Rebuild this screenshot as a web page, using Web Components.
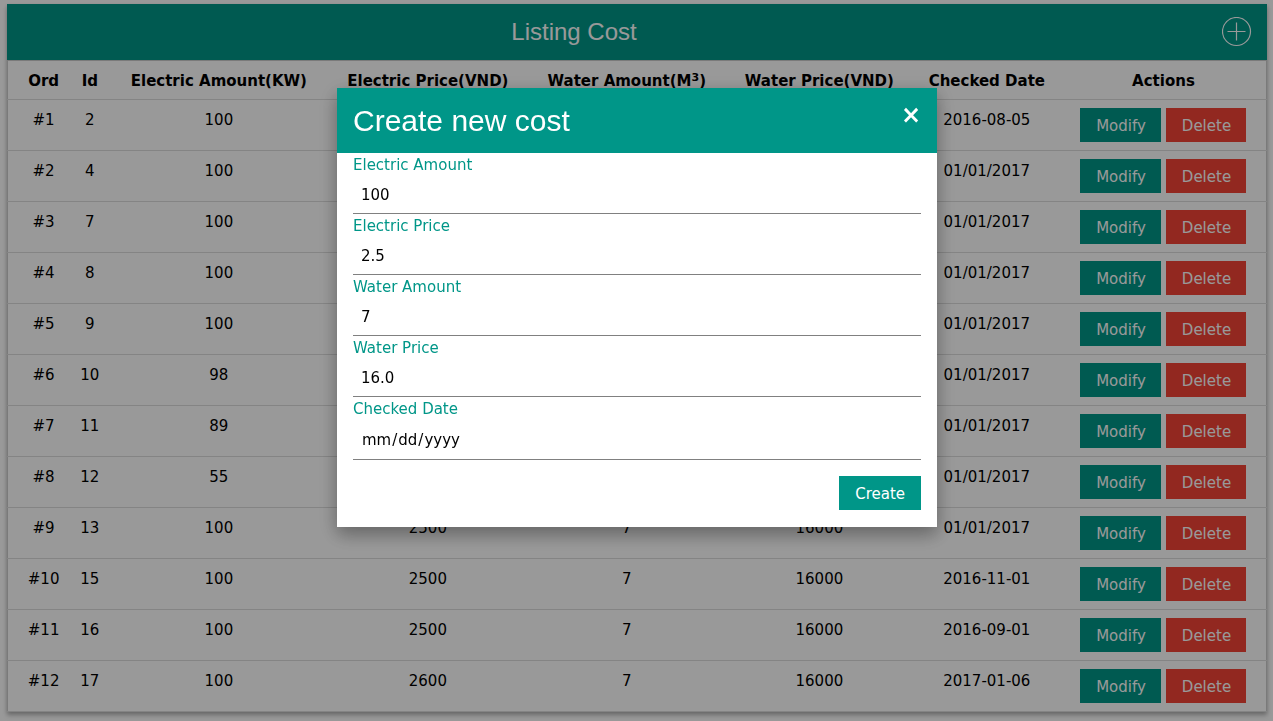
<!DOCTYPE html>
<html lang="en">
<head>
<meta charset="utf-8">
<meta name="viewport" content="width=device-width, initial-scale=1">
<title>Listing Cost</title>
<style>
  body { margin: 0; font: 15px/24px Verdana, "DejaVu Sans", sans-serif; color: #000; background: #fff; }
</style>
</head>
<body>
<cost-page>
  <cost-header slot="header">Listing Cost</cost-header>
  <cost-table slot="table"></cost-table>
  <cost-modal slot="modal" heading="Create new cost">
    <cost-field label="Electric Amount" value="100"></cost-field>
    <cost-field label="Electric Price" value="2.5"></cost-field>
    <cost-field label="Water Amount" value="7"></cost-field>
    <cost-field label="Water Price" value="16.0"></cost-field>
    <cost-field label="Checked Date" type="date"></cost-field>
    <action-button slot="footer">Create</action-button>
  </cost-modal>
</cost-page>

<script>
class BaseElement extends HTMLElement {
  connectedCallback() {
    if (!this.shadowRoot) this.attachShadow({ mode: "open" }).innerHTML = this.render();
  }
}

customElements.define("cost-page", class extends BaseElement {
  render() {
    return `<style>
      :host { display: block; padding: 4px 6px 9px 7px; }
      main { box-shadow: 0 2px 4px rgba(0,0,0,.2), 0 4px 5px rgba(0,0,0,.16); }
    </style>
    <main><slot name="header"></slot><slot name="table"></slot></main>
    <slot name="modal"></slot>`;
  }
});

customElements.define("cost-header", class extends BaseElement {
  render() {
    return `<style>
      :host { display: block; background: #009688; color: #fff; }
      header { display: grid; grid-template-columns: 90% 10%; align-items: center; height: 56px; }
      h1 { margin: 0; font: 400 24px/36px "Liberation Sans", Arial, sans-serif; text-align: center; }
      button { justify-self: end; margin: 0 15px 0 0; padding: 0; border: 0; background: none; color: inherit; cursor: pointer; }
      svg { display: block; }
    </style>
    <header>
      <h1><slot></slot></h1>
      <button type="button" aria-label="Add cost">
        <svg width="30" height="30" viewBox="0 0 30 30" fill="none" stroke="currentColor" stroke-width="1.2">
          <circle cx="14.5" cy="14.5" r="14"/><path d="M14.5 5.5v18M5.5 14.5h18"/>
        </svg>
      </button>
    </header>`;
  }
});

customElements.define("action-button", class extends BaseElement {
  render() {
    return `<style>
      :host { display: inline-block; }
      button { display: block; width: 100%; margin: 0; padding: 6px var(--button-inset, 16px) 4px; border: 0; font: inherit; color: #fff; background: var(--button-color, #009688); cursor: pointer; }
    </style>
    <button type="button"><slot></slot></button>`;
  }
});

customElements.define("cost-table", class extends BaseElement {
  render() {
    const columns = [
      ["Ord", 4.9], ["Id", 3.2], ["Electric Amount(KW)", 17.3], ["Electric Price(VND)", 15.9],
      ["Water Amount(M<sup>3</sup>)", 15.7], ["Water Price(VND)", 14.9], ["Checked Date", 11.7], ["Actions", 16.4]
    ];
    const rows = [
      [2, 100, 2500, 7, 16000, "2016-08-05"],
      [4, 100, 2500, 7, 16000, "01/01/2017"],
      [7, 100, 2500, 7, 16000, "01/01/2017"],
      [8, 100, 2500, 7, 16000, "01/01/2017"],
      [9, 100, 2500, 7, 16000, "01/01/2017"],
      [10, 98, 2500, 7, 16000, "01/01/2017"],
      [11, 89, 2500, 7, 16000, "01/01/2017"],
      [12, 55, 2500, 7, 16000, "01/01/2017"],
      [13, 100, 2500, 7, 16000, "01/01/2017"],
      [15, 100, 2500, 7, 16000, "2016-11-01"],
      [16, 100, 2500, 7, 16000, "2016-09-01"],
      [17, 100, 2600, 7, 16000, "2017-01-06"]
    ];
    return `<style>
      :host { display: block; }
      table { width: 100%; table-layout: fixed; border-collapse: collapse; border: 1px solid #ccc; background: #fff; }
      tr { border-bottom: 1px solid #ddd; }
      th, td { padding: 8px 0 8px 1px; text-align: center; vertical-align: top; white-space: nowrap; }
      th { padding-bottom: 6px; }
      th:first-child, td:first-child { padding-left: 10px; }
      sup { font-size: 11px; line-height: 0; vertical-align: 5px; }
      .actions { display: flex; justify-content: center; gap: 5px; }
      .actions action-button { width: 81px; --button-inset: 15px; }
      .actions .delete { width: 80px; --button-color: #f44336; }
    </style>
    <table>
      <colgroup>${columns.map(c => `<col style="width:${c[1]}%">`).join("")}</colgroup>
      <thead><tr>${columns.map(c => `<th scope="col">${c[0]}</th>`).join("")}</tr></thead>
      <tbody>${rows.map((r, i) => `<tr><td>#${i + 1}</td>${r.map(v => `<td>${v}</td>`).join("")}
        <td><div class="actions"><action-button>Modify</action-button><action-button class="delete">Delete</action-button></div></td></tr>`).join("")}</tbody>
    </table>`;
  }
});

customElements.define("cost-field", class extends BaseElement {
  render() {
    return `<style>
      :host { display: block; }
      label { display: block; color: #009688; }
      input { display: block; box-sizing: border-box; width: 100%; height: 37px; margin: 0; padding: 6px 8px; border: 0; border-bottom: 1px solid #808080; border-radius: 0; outline: 0; background: #fff; font: inherit; color: #000; }
      input[type="date"] { height: 39px; }
      input::-webkit-calendar-picker-indicator { display: none; }
    </style>
    <label for="field">${this.getAttribute("label")}</label>
    <input id="field" type="${this.getAttribute("type") || "text"}" value="${this.getAttribute("value") || ""}">`;
  }
});

customElements.define("cost-modal", class extends BaseElement {
  render() {
    return `<style>
      :host { position: fixed; inset: 0; box-sizing: border-box; padding: 88px 0 0 1px; overflow: auto; background: rgba(0,0,0,.4); }
      section { max-width: 600px; margin: 0 auto; background: #fff; box-shadow: 0 8px 16px rgba(0,0,0,.2), 0 6px 20px rgba(0,0,0,.19); }
      header { display: flex; justify-content: space-between; align-items: flex-start; padding: 10px 16px; background: #009688; color: #fff; }
      h2 { margin: 0; font: 400 30px/45px "Liberation Sans", Arial, sans-serif; }
      button { margin: 0; padding: 0; border: 0; background: none; color: inherit; font: bold 24px/34px Verdana, "DejaVu Sans", sans-serif; cursor: pointer; }
      form { padding: 0 16px; }
      footer { display: flex; justify-content: flex-end; padding: 16px 0 17px; }
    </style>
    <section role="dialog" aria-modal="true" aria-labelledby="title">
      <header><h2 id="title">${this.getAttribute("heading")}</h2><button type="button" aria-label="Close">×</button></header>
      <form><slot></slot><footer><slot name="footer"></slot></footer></form>
    </section>`;
  }
});
</script>
</body>
</html>
